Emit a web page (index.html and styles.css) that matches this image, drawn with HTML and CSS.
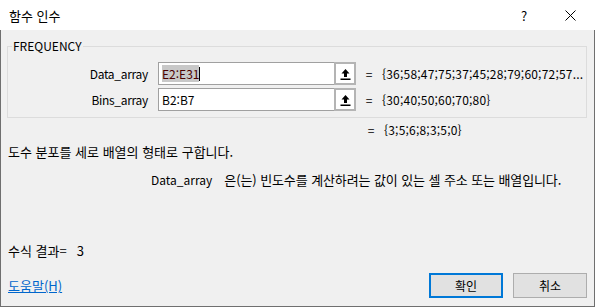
FILE: index.html
```html
<!DOCTYPE html>
<html lang="ko">
<head>
  <meta charset="UTF-8">
  <title>함수 인수</title>
  <link rel="stylesheet" href="styles.css">
</head>
<body>
  <div class="window">
    <div class="titlebar">
      <span class="title">함수 인수</span>
      <span class="title-btn help">?</span>
      <span class="title-btn close">
        <svg width="11" height="11" viewBox="0 0 11 11"><path d="M0.5 0.5 L10.5 10.5 M10.5 0.5 L0.5 10.5" stroke="#000" stroke-width="1" fill="none"/></svg>
      </span>
    </div>

    <div class="content">
      <fieldset class="group">
        <legend>FREQUENCY</legend>

        <div class="arg-row">
          <label class="arg-label">Data_array</label>
          <div class="arg-input"><span class="selected">E2:E31</span><span class="caret"></span></div>
          <button class="ref-btn">
            <svg width="11" height="12" viewBox="0 0 11 12"><path d="M5.5 1 L1.5 5.5 H4 V9 H7 V5.5 H9.5 Z" fill="#000"/><rect x="0.5" y="10.5" width="10" height="1.5" fill="#000"/></svg>
          </button>
          <span class="eq">=</span>
          <span class="arg-value">{36;58;47;75;37;45;28;79;60;72;57...</span>
        </div>

        <div class="arg-row">
          <label class="arg-label">Bins_array</label>
          <div class="arg-input">B2:B7</div>
          <button class="ref-btn">
            <svg width="11" height="12" viewBox="0 0 11 12"><path d="M5.5 1 L1.5 5.5 H4 V9 H7 V5.5 H9.5 Z" fill="#000"/><rect x="0.5" y="10.5" width="10" height="1.5" fill="#000"/></svg>
          </button>
          <span class="eq">=</span>
          <span class="arg-value">{30;40;50;60;70;80}</span>
        </div>
      </fieldset>

      <div class="result-row">
        <span class="eq">=</span>
        <span class="arg-value">{3;5;6;8;3;5;0}</span>
      </div>

      <p class="desc">도수 분포를 세로 배열의 형태로 구합니다.</p>
      <p class="arg-desc"><span class="arg-name">Data_array</span><span class="arg-text">은(는) 빈도수를 계산하려는 값이 있는 셀 주소 또는 배열입니다.</span></p>

      <p class="formula">수식 결과=<span class="formula-value">3</span></p>

      <div class="footer">
        <a class="help-link" href="#">도움말(H)</a>
        <div class="buttons">
          <button class="dlg-btn default">확인</button>
          <button class="dlg-btn">취소</button>
        </div>
      </div>
    </div>
  </div>
</body>
</html>
```

FILE: styles.css
```css
* {
  box-sizing: border-box;
}

body {
  margin: 0;
  background: #ffffff;
  font-family: "Noto Sans CJK KR", "Noto Sans", sans-serif;
  font-size: 12px;
  color: #000000;
}

.window {
  width: 595px;
  height: 307px;
  display: flex;
  flex-direction: column;
}

.titlebar {
  height: 30px;
  background: #ffffff;
  display: flex;
  align-items: center;
  padding-left: 9px;
}

.title {
  flex: 1;
  font-size: 13px;
}

.title-btn {
  display: flex;
  align-items: center;
  justify-content: center;
  width: 46px;
  height: 30px;
}

.help {
  font-size: 13px;
}

.close {
  margin-right: 2px;
}

.content {
  flex: 1;
  background: #f0f0f0;
  border-left: 1px solid #6f6f6f;
  border-right: 1px solid #6f6f6f;
  border-bottom: 1px solid #6f6f6f;
  padding: 8px 7px 0 6px;
}

.group {
  margin: 0;
  border: 1px solid #dcdcdc;
  padding: 8px 0 0 0;
  height: 80px;
}

.group legend {
  padding: 0 1px;
  margin-left: 4px;
  font-size: 12px;
  line-height: 16px;
}

.arg-row {
  display: flex;
  align-items: center;
  height: 23px;
  margin-bottom: 3px;
}

.arg-label {
  width: 140px;
  text-align: right;
  margin-right: 10px;
  letter-spacing: -0.3px;
}

.arg-input {
  width: 176px;
  height: 100%;
  background: #ffffff;
  border: 1px solid #a0a0a0;
  border-right: none;
  display: flex;
  align-items: center;
  padding-left: 3px;
}

.selected {
  background: #c8c8c8;
  color: #4b0000;
}

.caret {
  width: 1px;
  height: 14px;
  background: #000000;
}

.ref-btn {
  width: 22px;
  height: 100%;
  background: #ffffff;
  border: 2px solid #b4b4b4;
  padding: 0;
  display: flex;
  align-items: center;
  justify-content: center;
}

.eq {
  width: 26px;
  text-align: center;
}

.arg-value {
  white-space: nowrap;
  letter-spacing: 0.2px;
}

.result-row {
  display: flex;
  align-items: center;
  height: 20px;
  margin-top: 1px;
  padding-left: 351px;
}

.desc {
  margin: 4px 0 0 1px;
  font-size: 13px;
  line-height: 18px;
}

.arg-desc {
  margin: 10px 0 0 144px;
  line-height: 18px;
  white-space: nowrap;
}

.arg-name {
  margin-right: 12px;
}

.arg-text {
  font-size: 13px;
  letter-spacing: -0.1px;
}

.formula {
  margin: 53px 0 0 1px;
  font-size: 13px;
  line-height: 18px;
}

.formula-value {
  margin-left: 10px;
}

.footer {
  display: flex;
  align-items: center;
  justify-content: space-between;
  margin-top: 13px;
}

.help-link {
  color: #0066cc;
  text-decoration: underline;
  margin-left: 1px;
  font-size: 13px;
}

.buttons {
  display: flex;
  gap: 10px;
}

.dlg-btn {
  width: 74px;
  height: 25px;
  background: #e1e1e1;
  border: 1px solid #adadad;
  font-family: inherit;
  font-size: 12px;
  padding: 0;
}

.dlg-btn.default {
  border: 2px solid #0078d7;
}
```
